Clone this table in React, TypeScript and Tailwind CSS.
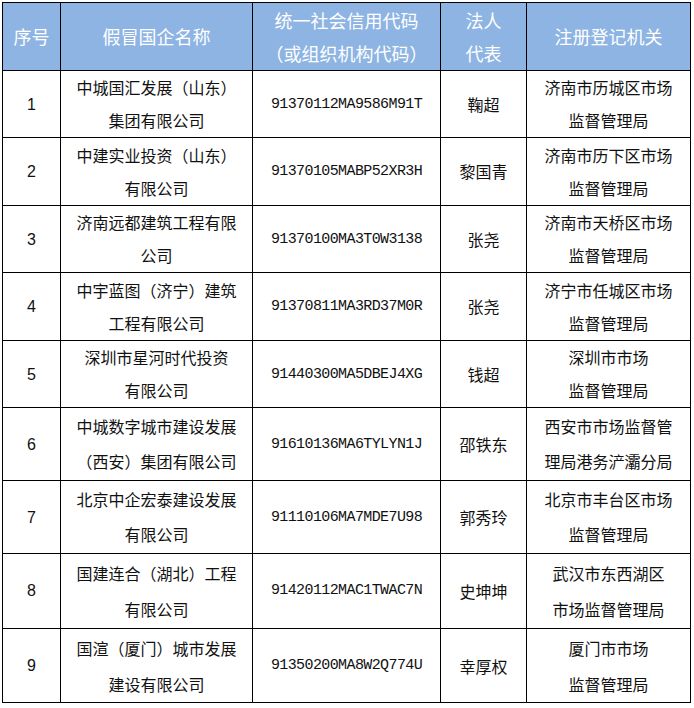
import React from "react";

type Row = {
  no: string;
  name: React.ReactNode;
  code: string;
  rep: string;
  org: React.ReactNode;
  h: string;
  lh: string;
};

const rows: Row[] = [
  { no: "1", name: <>中城国汇发展（山东）<br />集团有限公司</>, code: "91370112MA9586M91T", rep: "鞠超", org: <>济南市历城区市场<br />监督管理局</>, h: "h-[67px]", lh: "leading-[33px]" },
  { no: "2", name: <>中建实业投资（山东）<br />有限公司</>, code: "91370105MABP52XR3H", rep: "黎国青", org: <>济南市历下区市场<br />监督管理局</>, h: "h-[68px]", lh: "leading-[33px]" },
  { no: "3", name: <>济南远都建筑工程有限<br />公司</>, code: "91370100MA3T0W3138", rep: "张尧", org: <>济南市天桥区市场<br />监督管理局</>, h: "h-[67px]", lh: "leading-[33px]" },
  { no: "4", name: <>中宇蓝图（济宁）建筑<br />工程有限公司</>, code: "91370811MA3RD37M0R", rep: "张尧", org: <>济宁市任城区市场<br />监督管理局</>, h: "h-[68px]", lh: "leading-[33px]" },
  { no: "5", name: <>深圳市星河时代投资<br />有限公司</>, code: "91440300MA5DBEJ4XG", rep: "钱超", org: <>深圳市市场<br />监督管理局</>, h: "h-[67px]", lh: "leading-[33px]" },
  { no: "6", name: <>中城数字城市建设发展<br />（西安）集团有限公司</>, code: "91610136MA6TYLYN1J", rep: "邵铁东", org: <>西安市市场监督管<br />理局港务浐灞分局</>, h: "h-[73px]", lh: "leading-[35px]" },
  { no: "7", name: <>北京中企宏泰建设发展<br />有限公司</>, code: "91110106MA7MDE7U98", rep: "郭秀玲", org: <>北京市丰台区市场<br />监督管理局</>, h: "h-[73px]", lh: "leading-[35px]" },
  { no: "8", name: <>国建连合（湖北）工程<br />有限公司</>, code: "91420112MAC1TWAC7N", rep: "史坤坤", org: <>武汉市东西湖区<br />市场监督管理局</>, h: "h-[75px]", lh: "leading-[36px]" },
  { no: "9", name: <>国渲（厦门）城市发展<br />建设有限公司</>, code: "91350200MA8W2Q774U", rep: "幸厚权", org: <>厦门市市场<br />监督管理局</>, h: "h-[74px]", lh: "leading-[36px]" },
];

const cjk = "font-['Noto_Sans_CJK_SC','Noto_Sans',sans-serif]";

export default function App() {
  return (
    <div className="w-[694px] h-[708px] bg-white pt-[2px] pl-[2px]">
      <table className={`table-fixed border-collapse w-[689px] ${cjk} text-[#111]`}>
        <colgroup>
          <col className="w-[58px]" />
          <col className="w-[192px]" />
          <col className="w-[188px]" />
          <col className="w-[86px]" />
          <col className="w-[164px]" />
        </colgroup>
        <thead>
          <tr className="h-[68px] bg-[#8db4e2] text-white text-[18px] leading-[33px]">
            <th className="border border-black font-normal p-0 text-center">序号</th>
            <th className="border border-black font-normal p-0 text-center">假冒国企名称</th>
            <th className="border border-black font-normal p-0 text-center">统一社会信用代码<br />（或组织机构代码）</th>
            <th className="border border-black font-normal p-0 text-center">法人<br />代表</th>
            <th className="border border-black font-normal p-0 text-center">注册登记机关</th>
          </tr>
        </thead>
        <tbody>
          {rows.map((r) => (
            <tr key={r.no} className={`${r.h} text-[16px] ${r.lh}`}>
              <td className="border border-black p-0 text-center font-['Liberation_Sans',sans-serif]">{r.no}</td>
              <td className="border border-black p-0 text-center">{r.name}</td>
              <td className="border border-black p-0 text-center font-['Liberation_Mono',monospace] text-[15px] tracking-[-0.6px]">{r.code}</td>
              <td className="border border-black p-0 text-center">{r.rep}</td>
              <td className="border border-black p-0 text-center">{r.org}</td>
            </tr>
          ))}
        </tbody>
      </table>
    </div>
  );
}
